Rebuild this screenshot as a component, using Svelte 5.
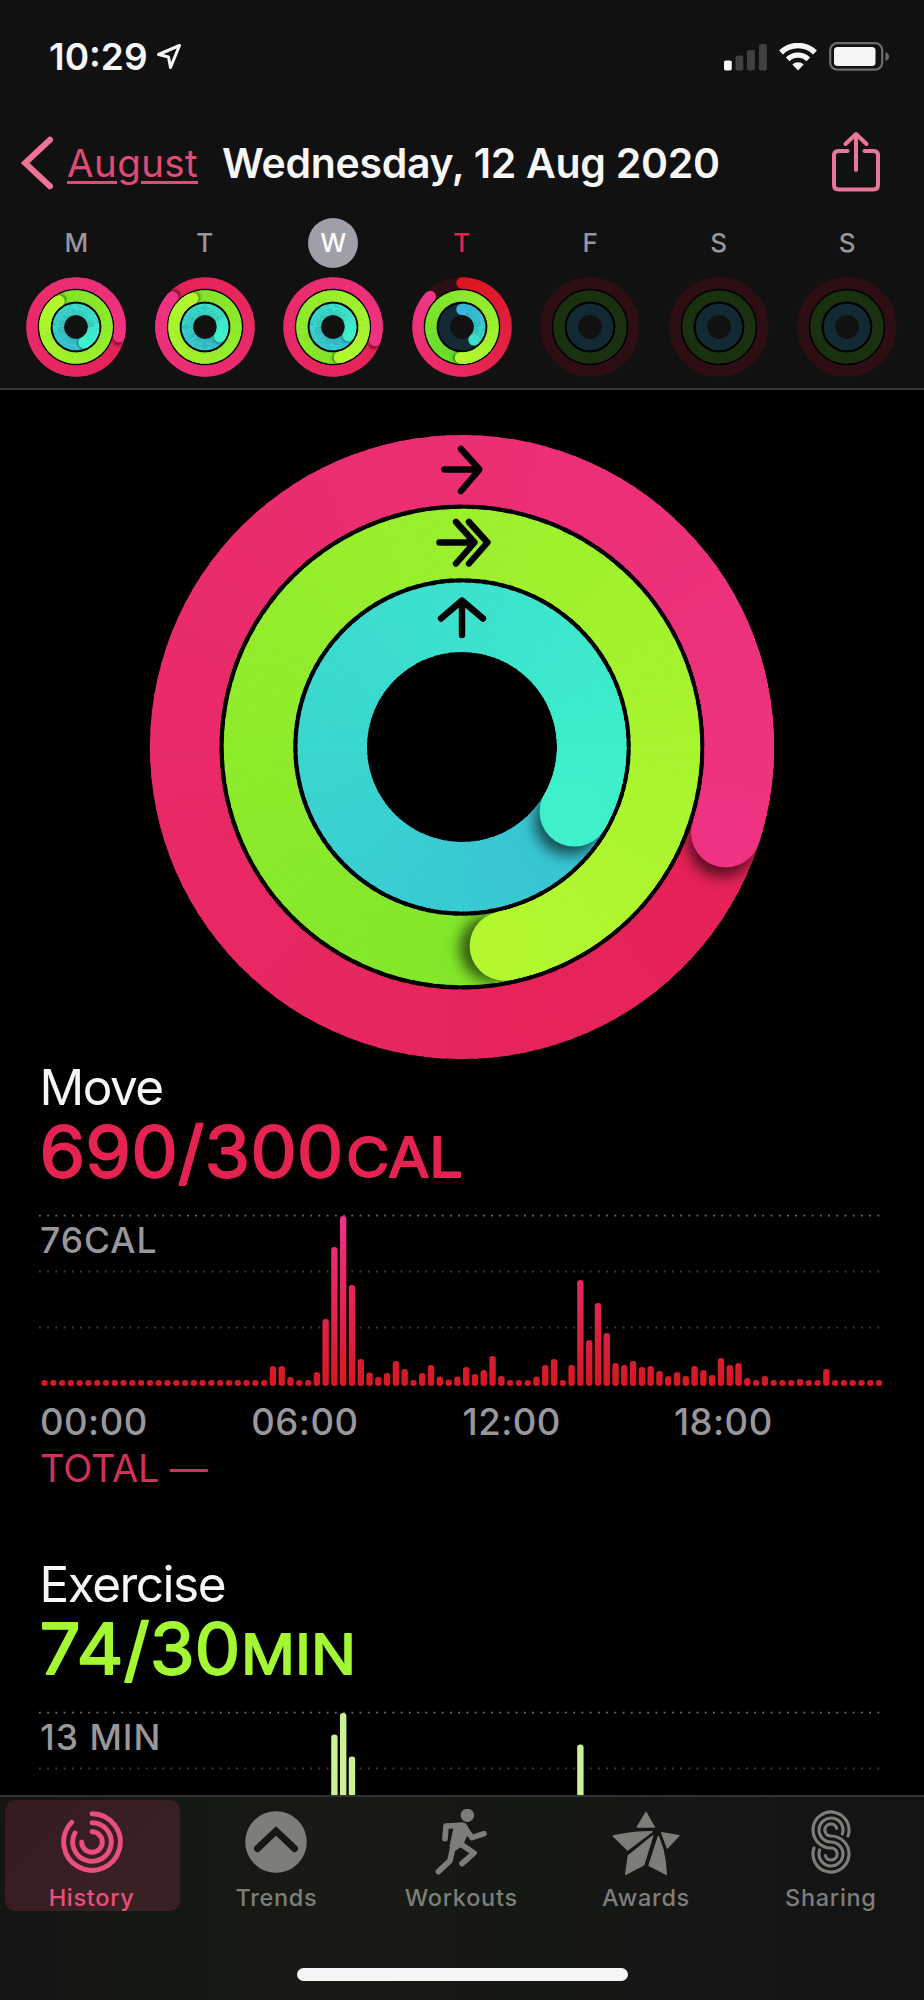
<script>
  const palette = {
    move: { from: '#e52254', to: '#ef3382', track: '#2d0e12' },
    exercise: { from: '#80e62a', to: '#b3f82f', track: '#193011' },
    stand: { from: '#37c3d3', to: '#3ff1cb', track: '#122a33' },
  };

  const big = { size: 624, width: 69.4, radii: [277.3, 203.5, 129.7] };
  const small = { size: 100, width: 11.4, radii: [44, 31.1, 17.6] };

  // Degrees past the top of the last lap; `lap` is false while the first lap is still open
  const today = [
    { kind: 'move', end: 108, lap: true },
    { kind: 'exercise', end: 168, lap: true },
    { kind: 'stand', end: 120, lap: true },
  ];

  const empty = [{ kind: 'move' }, { kind: 'exercise' }, { kind: 'stand' }];

  const week = [
    {
      label: 'M',
      rings: [
        { kind: 'move', end: 103, lap: true },
        { kind: 'exercise', end: 327, lap: true },
        { kind: 'stand', end: 153, lap: true },
      ],
    },
    {
      label: 'T',
      rings: [
        { kind: 'move', end: 313, lap: true },
        { kind: 'exercise', end: 337, lap: true },
        { kind: 'stand', end: 124, lap: true },
      ],
    },
    { label: 'W', selected: true, rings: today },
    {
      label: 'T',
      today: true,
      rings: [
        { kind: 'move', end: 314, from: '#dc1620', to: '#f0368a' },
        { kind: 'exercise', end: 183, lap: true, from: '#66dd2b' },
        { kind: 'stand', end: 137, from: '#35b6dc', to: '#3ae0c8' },
      ],
    },
    { label: 'F', rings: empty },
    { label: 'S', rings: empty },
    { label: 'S', rings: empty },
  ];

  const moveBars = [
    ...Array(26).fill(6),
    20, 20, 9, 6, 6, 14, 67, 139, 170, 101, 27, 13.5, 9, 13, 25, 17, 6, 13, 21, 9.5, 6.5, 9.5,
    19, 12, 16, 30, 10, 6, 6, 6, 9.5, 21, 27, 6, 21, 106, 46, 83, 53, 23, 21, 25, 19, 20, 15,
    10, 14, 10, 20, 16, 11, 28, 21, 23, 8, 6, 10, 6, 6, 6, 7, 6, 6, 17, 6, 6, 6, 6, 6, 6,
  ];

  const exerciseBars = Array(96).fill(0);
  exerciseBars[33] = 148.5;
  exerciseBars[34] = 170;
  exerciseBars[35] = 126.5;
  exerciseBars[61] = 138.5;

  const hours = ['00:00', '06:00', '12:00', '18:00'];
  const gridLines = [5.7, 61.5, 117.5];

  function point(r, deg) {
    const a = ((deg - 90) * Math.PI) / 180;
    return [r * Math.cos(a), r * Math.sin(a)];
  }

  function arc(r, a0, a1) {
    const [x0, y0] = point(r, a0);
    const [x1, y1] = point(r, a1);
    return `M${x0} ${y0}A${r} ${r} 0 ${a1 - a0 > 180 ? 1 : 0} 1 ${x1} ${y1}`;
  }

  function mix(c0, c1, t) {
    const ch = (c, i) => parseInt(c.slice(i, i + 2), 16);
    return `rgb(${[1, 3, 5].map((i) => Math.round(ch(c0, i) + (ch(c1, i) - ch(c0, i)) * t)).join(',')})`;
  }

  // A conic sweep made of short overlapping arcs
  function sweep(r, start, end, c0, c1) {
    const step = 3;
    const count = Math.ceil((end - start) / step);
    return Array.from({ length: count }, (_, i) => {
      const a = start + i * step;
      return { a, d: arc(r, a, Math.min(a + step + (i < count - 1 ? 1 : 0), end)), color: mix(c0, c1, i / count) };
    });
  }

  function band(r, w) {
    const c = (q) => `M${-q} 0A${q} ${q} 0 1 1 ${q} 0A${q} ${q} 0 1 1 ${-q} 0Z`;
    return c(r + w / 2) + c(r - w / 2);
  }
</script>

{#snippet rings(data, dim, id)}
  {@const h = dim.size / 2}
  <svg width={dim.size} height={dim.size} viewBox="{-h} {-h} {dim.size} {dim.size}">
    {#if dim === small}
      <circle r="30" fill="none" stroke="#000" stroke-width="17" />
      <circle r="24.3" fill="none" stroke="#000" stroke-width="3" />
    {/if}
    {#each data as ring, i}
      {@const r = dim.radii[i]}
      {@const base = palette[ring.kind]}
      {@const c0 = ring.from ?? base.from}
      {@const c1 = ring.to ?? base.to}
      {#if !ring.lap}
        <circle {r} fill="none" stroke={base.track} stroke-width={dim.width} />
      {/if}
      {#if ring.end}
        {@const start = ring.lap ? ring.end - 360 : 0}
        {@const parts = sweep(r, start, ring.end, c0, c1)}
        {@const [ex, ey] = point(r, ring.end)}
        {#if !ring.lap}
          <circle cx="0" cy={-r} r={dim.width / 2} fill={c0} />
        {/if}
        {#each parts as p}
          <path d={p.d} fill="none" stroke={p.color} stroke-width={dim.width} />
        {/each}
        {#if ring.lap}
          {@const [sx, sy] = point(r, ring.end + (dim === big ? 5 / (r / 130) : 4))}
          <clipPath id="{id}-{i}"><path d={band(r, dim.width)} clip-rule="evenodd" /></clipPath>
          <g clip-path="url(#{id}-{i})">
            <circle class="shade" class:shade-big={dim === big} cx={sx} cy={sy} r={dim.width / 2 - (dim === big ? 1 : 0.5)} />
          </g>
          {#each parts.filter((p) => p.a > ring.end - 60) as p}
            <path d={p.d} fill="none" stroke={p.color} stroke-width={dim.width} />
          {/each}
        {/if}
        <circle cx={ex} cy={ey} r={dim.width / 2} fill={c1} />
      {/if}
    {/each}
    {#if dim === big}
      <g class="ring-icons">
        <path d="M-17.5 -277.5H16M-1 -298L17.5 -277.5L-1 -256" />
        <path d="M-22.5 -204.5H12M-6 -225L12.5 -204.5L-6 -183.5M7 -225L25.5 -204.5L7 -183.5" />
        <path d="M0 -146V-112M-21 -128.5L0 -146.5L21 -128.5" />
      </g>
    {/if}
  </svg>
{/snippet}

{#snippet chart(bars, fill, label)}
  <div class="chart">
    <svg width="844" height="180" viewBox="0 0 844 180">
      <defs>
        <linearGradient id="move-fill" gradientUnits="userSpaceOnUse" x1="0" y1="176" x2="0" y2="6">
          <stop offset="0" stop-color="#d6181f" />
          <stop offset="1" stop-color="#ee338c" />
        </linearGradient>
      </defs>
      {#each gridLines as y, i}
        <line x1="0" x2="841" y1={y} y2={y} class="grid-line" class:first={i === 0} />
      {/each}
      {#each bars as h, i}
        {#if h}
          <rect x={2.3 + i * 8.785} y={176 - h} width="6.4" height={h} rx="3" {fill} />
        {/if}
      {/each}
    </svg>
    <span class="peak">{label}</span>
  </div>
{/snippet}

<div class="screen">
  <header>
    <div class="status">
      <span class="clock">10:29</span>
      <svg class="location" width="26" height="28" viewBox="0 0 26 28">
        <path d="M2.5 11.5L23.5 2.5L14.5 24.5L12.5 14Z" />
      </svg>
      <div class="indicators">
        <svg width="43" height="28" viewBox="0 0 43 28">
          <rect x="0" y="17.5" width="7.8" height="10" rx="1.8" fill="#f6f6f6" />
          <rect x="11.5" y="12.5" width="7.8" height="15" rx="1.8" fill="#414141" />
          <rect x="23" y="7" width="7.8" height="20.5" rx="1.8" fill="#414141" />
          <rect x="35" y="1" width="7.8" height="26.5" rx="1.8" fill="#414141" />
        </svg>
        <svg class="wifi" width="38" height="28" viewBox="0 0 38 28">
          <path d="M2 9.5A24 24 0 0 1 36 9.5" stroke-width="5.4" />
          <path d="M8.7 16.3A14.6 14.6 0 0 1 29.3 16.3" stroke-width="5.2" />
          <path class="dot" d="M13.3 21.5A8.4 8.4 0 0 1 24.7 21.5L19 27.5Z" />
        </svg>
        <svg width="61" height="29" viewBox="0 0 61 29">
          <rect x="1.2" y="1.2" width="52" height="26.5" rx="7" fill="none" stroke="#6c6c6c" stroke-width="2.2" />
          <rect x="5" y="5" width="41.5" height="19" rx="3.5" fill="#f6f6f6" />
          <path d="M56.5 10Q60 11.5 60 14.5T56.5 19Z" fill="#6c6c6c" />
        </svg>
      </div>
    </div>

    <nav>
      <svg width="34" height="56" viewBox="0 0 34 56">
        <path class="back" d="M29 4.7L4 28L29 51.3" />
      </svg>
      <a class="month" href="#august">August</a>
      <h1>Wednesday, 12 Aug 2020</h1>
      <svg class="share" width="52" height="67" viewBox="0 0 52 67">
        <path d="M17.5 21H8.5Q4 21 4 25.5V55Q4 59.5 8.5 59.5H43.5Q48 59.5 48 55V25.5Q48 21 43.5 21H34.5" />
        <path d="M26 40V5M15.5 14L26 4L36.5 14" />
      </svg>
    </nav>

    <div class="week">
      {#each week as day, i}
        <div class="day">
          <span class="letter" class:selected={day.selected} class:today={day.today}>{day.label}</span>
          {@render rings(day.rings, small, `day-${i}`)}
        </div>
      {/each}
    </div>
  </header>

  <main>
    <div class="hero">
      {@render rings(today, big, 'hero')}
    </div>

    <section>
      <h2>Move</h2>
      <svg class="value move" width="480" height="80" viewBox="0 0 480 80">
        <text x="0.5" y="62.5" textLength="304" lengthAdjust="spacingAndGlyphs" class="amount">690/300</text>
        <text x="307" y="62.5" textLength="117" lengthAdjust="spacingAndGlyphs" class="unit">CAL</text>
      </svg>
      {@render chart(moveBars, 'url(#move-fill)', '76CAL')}
      <div class="hours">
        {#each hours as hour}
          <span>{hour}</span>
        {/each}
      </div>
      <p class="total">TOTAL —</p>
    </section>

    <section class="exercise">
      <h2>Exercise</h2>
      <svg class="value exercise-value" width="480" height="80" viewBox="0 0 480 80">
        <text x="0.5" y="62.5" textLength="201" lengthAdjust="spacingAndGlyphs" class="amount">74/30</text>
        <text x="202" y="62.5" textLength="115" lengthAdjust="spacingAndGlyphs" class="unit">MIN</text>
      </svg>
      {@render chart(exerciseBars, '#cbf293', '13 MIN')}
    </section>
  </main>

  <footer>
    <div class="tabs">
      <button class="tab active">
        <svg width="66" height="66" viewBox="-33 -33 66 66">
          <g fill="none" stroke="currentColor" stroke-width="4.9" stroke-linecap="round">
            <path d={arc(28.3, 0, 314)} />
            <path d={arc(19.3, 0, 298)} />
            <path d={arc(10.3, 0, 270)} />
          </g>
        </svg>
        <span>History</span>
      </button>
      <button class="tab">
        <svg width="66" height="66" viewBox="-33 -33 66 66">
          <circle r="30.8" fill="currentColor" />
          <path d="M-18.5 6.5L0 -11L18.5 6.5" fill="none" stroke="#151812" stroke-width="7" stroke-linecap="round" />
        </svg>
        <span>Trends</span>
      </button>
      <button class="tab">
        <svg width="66" height="66" viewBox="10 27 198 198">
          <circle cx="128" cy="46" r="20" fill="currentColor" />
          <path d="M88 68H116Q124 68 128 76L134 92L119 126L120 134L92 152L74 140L86 86Z" fill="currentColor" />
          <g fill="none" stroke="currentColor" stroke-width="17" stroke-linecap="round" stroke-linejoin="round">
            <path d="M61 116L64 78L115 76L142 113L178 101" />
            <path d="M88 128L76 182L41 215" />
            <path d="M105 130L148 159L112 191" />
          </g>
        </svg>
        <span>Workouts</span>
      </button>
      <button class="tab">
        <svg width="72" height="66" viewBox="445 358 216 198">
          <g fill="currentColor" stroke="currentColor" stroke-width="4" stroke-linejoin="round">
            <path d="M553 368L527 412H578Z" />
            <path d="M455 439Q510 426 571 426L498 481Z" />
            <path d="M600 429L652 438L617 475Z" />
            <path d="M500 498L573 439L546 526L492 554Z" />
            <path d="M590 440L604 480Q612 515 614 554L562 527Z" />
          </g>
        </svg>
        <span>Awards</span>
      </button>
      <button class="tab">
        <svg width="66" height="66" viewBox="-99 -99 198 198">
          <g fill="none" stroke="currentColor" stroke-width="9.5" stroke-linecap="round">
            <path d="M51 -18A54 54 0 1 0 0 18A18 18 0 1 1 -17 41" />
            <path d="M34 -24A36 36 0 1 0 0 0A36 36 0 1 1 -34 24" />
            <path d="M17 -41A18 18 0 1 0 0 -18A54 54 0 1 1 -51 18" />
          </g>
        </svg>
        <span>Sharing</span>
      </button>
    </div>
    <div class="home"></div>
  </footer>
</div>

<style>
  :global(body) {
    background: #000;
  }

  .screen {
    display: flex;
    flex-direction: column;
    width: 924px;
    height: 2000px;
    overflow: hidden;
    background: #000;
    color: #f6f6f6;
    font-family: Inter, "Liberation Sans", sans-serif;
    white-space: nowrap;
  }

  svg {
    display: block;
    flex-shrink: 0;
  }

  h1,
  h2,
  p {
    margin: 0;
  }

  header {
    flex: none;
    box-sizing: border-box;
    height: 390px;
    background: #111;
    border-bottom: 2px solid #363638;
  }

  .status {
    display: flex;
    align-items: center;
    height: 113px;
    padding: 0 34px 0 49px;
  }

  .clock {
    font-size: 37px;
    font-weight: 600;
  }

  .location {
    margin-left: 8px;
    fill: none;
    stroke: #f6f6f6;
    stroke-width: 3;
    stroke-linejoin: round;
  }

  .indicators {
    display: flex;
    align-items: center;
    gap: 12px;
    margin-left: auto;
  }

  .wifi {
    fill: none;
    stroke: #f6f6f6;
  }

  .wifi .dot {
    fill: #f6f6f6;
    stroke: none;
  }

  nav {
    display: flex;
    align-items: center;
    height: 100px;
    padding: 0 42px 0 21px;
  }

  .back {
    fill: none;
    stroke: #ef7396;
    stroke-width: 6;
    stroke-linecap: round;
  }

  .month {
    margin-left: 12px;
    font-size: 38.5px;
    letter-spacing: 0.4px;
    color: #e04a76;
    text-decoration-thickness: 2.5px;
    text-underline-offset: 4px;
  }

  h1 {
    margin-left: 24px;
    font-size: 41px;
    font-weight: 600;
    letter-spacing: -0.3px;
  }

  .share {
    margin-left: auto;
    fill: none;
    stroke: #e7789a;
    stroke-width: 4;
    stroke-linecap: round;
    stroke-linejoin: round;
  }

  .week {
    display: grid;
    grid-template-columns: repeat(7, 128.5px);
    padding: 5px 12px 0;
  }

  .day {
    display: flex;
    flex-direction: column;
    align-items: center;
    gap: 9px;
  }

  .letter {
    width: 50px;
    height: 50px;
    border-radius: 50%;
    line-height: 50px;
    text-align: center;
    font-size: 26px;
    font-weight: 500;
    color: #98979d;
  }

  .letter.selected {
    background: #a09fa9;
    color: #fff;
  }

  .letter.today {
    color: #e22553;
  }

  .shade {
    opacity: 0.5;
    filter: blur(1.5px);
  }

  .shade-big {
    opacity: 0.6;
    filter: blur(7px);
  }

  .ring-icons {
    fill: none;
    stroke: #000;
    stroke-width: 6.4;
    stroke-linecap: round;
    stroke-linejoin: round;
  }

  main {
    flex: 1;
    min-height: 0;
    overflow: hidden;
  }

  .hero {
    display: flex;
    justify-content: center;
    height: 625px;
    padding-top: 45px;
  }

  section {
    padding: 0 39px;
  }

  section.exercise {
    margin-top: 66px;
  }

  h2 {
    padding-left: 0.5px;
    font-size: 49.5px;
    font-weight: 400;
    line-height: 54px;
    letter-spacing: -1.5px;
  }

  .value {
    stroke-width: 1.8;
    stroke-linejoin: round;
    overflow: visible;
  }

  .value.move {
    fill: #e52351;
    stroke: #e52351;
  }

  .value.exercise-value {
    fill: #a4f833;
    stroke: #a4f833;
  }

  .amount {
    font-size: 70.5px;
    font-weight: 400;
  }

  .unit {
    font-size: 55px;
    font-weight: 400;
  }

  .chart {
    position: relative;
    margin-top: 16px;
  }

  .grid-line {
    stroke: #3c3c3c;
    stroke-width: 1.8;
    stroke-dasharray: 1.8 6.42;
  }

  .grid-line.first {
    stroke: #6e6e6e;
  }

  .peak {
    position: absolute;
    top: 9px;
    left: 1px;
    font-size: 35.5px;
    line-height: 44px;
    font-weight: 500;
    letter-spacing: 1px;
    color: #98979c;
  }

  .hours {
    display: grid;
    grid-template-columns: repeat(4, 211.3px);
    margin: 10px 0 0 1px;
    font-size: 36.5px;
    line-height: 44px;
    font-weight: 500;
    letter-spacing: 0.5px;
    color: #98979c;
  }

  .total {
    margin: 0.5px 0 0 1px;
    font-size: 38px;
    line-height: 46px;
    letter-spacing: -0.2px;
    color: #cf3157;
  }

  footer {
    flex: none;
    box-sizing: border-box;
    height: 205px;
    border-top: 2px solid #333432;
    background: linear-gradient(90deg, #151514 0, #141912 22%, #191a13 37%, #141812 58%, #161616 76%, #131313 100%);
  }

  .tabs {
    display: grid;
    grid-template-columns: repeat(5, 184.8px);
    height: 171px;
  }

  .tab {
    display: flex;
    flex-direction: column;
    align-items: center;
    justify-self: center;
    box-sizing: border-box;
    width: 175px;
    height: 111px;
    margin-top: 3px;
    padding: 9px 1.5px 0 0;
    border: none;
    border-radius: 11px;
    background: none;
    color: #7d7e7a;
    font-family: inherit;
  }

  .tab.active {
    background: linear-gradient(135deg, #351b21, #3a2224);
    color: #ea4f7c;
  }

  .tab span {
    margin-top: 8px;
    font-size: 23.5px;
    line-height: 30px;
    font-weight: 500;
    letter-spacing: 0.7px;
  }

  .home {
    width: 331px;
    height: 12.5px;
    margin: 0 auto;
    border-radius: 7px;
    background: #f5f5f5;
  }
</style>
